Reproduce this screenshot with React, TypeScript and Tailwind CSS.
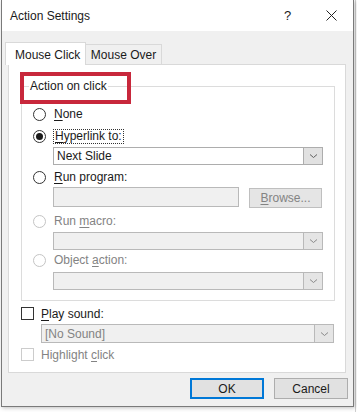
import { ReactNode } from "react";

function Radio({ checked, disabled }: { checked?: boolean; disabled?: boolean }) {
  return (
    <span
      className={
        "w-[13px] h-[13px] rounded-full border bg-white flex items-center justify-center shrink-0 " +
        (disabled ? "border-[#c4c4c4]" : "border-[#333333]")
      }
    >
      {checked ? <span className="w-[7px] h-[7px] rounded-full bg-[#1a1a1a]" /> : null}
    </span>
  );
}

function Chevron({ light }: { light?: boolean }) {
  return (
    <svg width="9" height="6" viewBox="0 0 9 6">
      <path d="M1 1.5 L4.5 4.5 L8 1.5" fill="none" stroke={light ? "#8a8a8a" : "#606060"} strokeWidth="1" />
    </svg>
  );
}

function Select({ text, disabled, w, h }: { text?: string; disabled?: boolean; w: string; h: string }) {
  return (
    <div
      className={
        "flex border " +
        w +
        " " +
        h +
        (disabled ? " bg-[#f0f0f0] border-[#b9b9b9]" : " bg-white border-[#adadad]")
      }
    >
      <div className={"flex-1 flex items-center pl-[3px] " + (disabled ? "text-[#838383]" : "text-[#1a1a1a]")}>
        {text}
      </div>
      <div
        className={
          "w-[19px] border-l flex items-center justify-center " +
          (disabled ? "bg-[#e5e5e5] border-[#b9b9b9]" : "bg-[#e1e1e1] border-[#adadad]")
        }
      >
        <Chevron light={disabled} />
      </div>
    </div>
  );
}

function Label({ children, disabled }: { children: ReactNode; disabled?: boolean }) {
  return <span className={disabled ? "text-[#838383]" : "text-[#1a1a1a]"}>{children}</span>;
}

function U({ children }: { children: ReactNode }) {
  return <span className="underline underline-offset-[2px] decoration-1">{children}</span>;
}

export default function App() {
  return (
    <div
      className="w-[357px] h-[412px] bg-white relative overflow-hidden text-[12px] leading-[16px] text-[#1a1a1a]"
      style={{ fontFamily: '"Liberation Sans", "Segoe UI", sans-serif' }}
    >
      <div className="absolute top-0 bottom-0 left-[355px] w-px bg-[#cfcfcf]" />
      <div className="ml-[1px] w-[353px] h-[407px] border-x border-b border-[#7a7a7a] bg-[#f0f0f0] flex flex-col relative shadow-[1px_1px_4px_rgba(0,0,0,0.25)]">
        {/* title bar */}
        <div className="h-[31px] bg-white flex items-center shrink-0">
          <div className="pl-[8px] flex-1 text-[12px]">Action Settings</div>
          <div className="w-[10px] mr-[32px] text-[13px]">?</div>
          <svg width="11" height="11" viewBox="0 0 11 11" className="mr-[16px]">
            <path d="M0.5 0.5 L10.5 10.5 M10.5 0.5 L0.5 10.5" stroke="#222" strokeWidth="1" />
          </svg>
        </div>

        {/* tabs */}
        <div className="pl-[3px] pt-[11px] flex items-end shrink-0">
          <div className="w-[81px] h-[23px] bg-white border border-b-0 border-[#d9d9d9] flex items-center pl-[9px] pt-[1px] relative z-10 -mb-px">
            Mouse Click
          </div>
          <div className="w-[76px] h-[20px] bg-[#f0f0f0] border border-l-0 border-b-0 border-[#d9d9d9] flex items-center justify-center pt-[1px]">
            Mouse Over
          </div>
        </div>

        {/* panel */}
        <div className="ml-[6px] w-[338px] h-[309px] bg-white border border-[#d9d9d9] pt-[21px] pl-[12px] flex flex-col shrink-0">
          <div className="w-[314px] h-[215px] border border-[#dcdcdc] relative flex flex-col pl-[11px] shrink-0">
            <div className="absolute -top-[9px] left-[7px] bg-white px-[1px]">Action on click</div>

            <div className="mt-[19px] flex items-center h-[16px]">
              <Radio />
              <span className="ml-[8px]">
                <Label><U>N</U>one</Label>
              </span>
            </div>

            <div className="mt-[6px] flex items-center h-[16px]">
              <Radio checked />
              <span className="ml-[7px] border border-dotted border-[#333] px-px leading-[13px]">
                <Label><U>H</U>yperlink to:</Label>
              </span>
            </div>

            <div className="mt-[3px] ml-[20px]">
              <Select text="Next Slide" w="w-[270px]" h="h-[18px]" />
            </div>

            <div className="mt-[4px] flex items-center h-[16px]">
              <Radio />
              <span className="ml-[8px]">
                <Label><U>R</U>un program:</Label>
              </span>
            </div>

            <div className="mt-[2px] ml-[20px] flex items-start">
              <div className="w-[186px] h-[20px] bg-[#f0f0f0] border border-[#b9b9b9]" />
              <div className="ml-[10px] mt-px w-[73px] h-[20px] bg-[#e5e5e5] border border-[#bfbfbf] flex items-center justify-center text-[#838383]">
                <span><U>B</U>rowse...</span>
              </div>
            </div>

            <div className="mt-[5px] flex items-center h-[16px]">
              <Radio disabled />
              <span className="ml-[8px]">
                <Label disabled>Run <U>m</U>acro:</Label>
              </span>
            </div>

            <div className="mt-[3px] ml-[20px]">
              <Select disabled w="w-[270px]" h="h-[18px]" />
            </div>

            <div className="mt-[2px] flex items-center h-[16px]">
              <Radio disabled />
              <span className="ml-[8px]">
                <Label disabled>Object <U>a</U>ction:</Label>
              </span>
            </div>

            <div className="mt-[4px] ml-[20px]">
              <Select disabled w="w-[270px]" h="h-[18px]" />
            </div>
          </div>

          <div className="mt-[6px] flex items-center h-[13px]">
            <span className="w-[13px] h-[13px] border border-[#333333] bg-white shrink-0" />
            <span className="ml-[7px]">
              <Label><U>P</U>lay sound:</Label>
            </span>
          </div>

          <div className="mt-[4px] ml-[20px]">
            <Select disabled text="[No Sound]" w="w-[293px]" h="h-[19px]" />
          </div>

          <div className="mt-[5px] flex items-center h-[13px]">
            <span className="w-[13px] h-[13px] border border-[#cccccc] bg-white shrink-0" />
            <span className="ml-[7px]">
              <Label disabled>Highlight <U>c</U>lick</Label>
            </span>
          </div>
        </div>

        {/* buttons */}
        <div className="mt-[5px] flex justify-end pr-[5px] gap-[10px]">
          <div className="w-[74px] h-[21px] bg-[#e1e1e1] border-2 border-[#0078d7] flex items-center justify-center">
            OK
          </div>
          <div className="w-[74px] h-[21px] bg-[#e1e1e1] border border-[#adadad] flex items-center justify-center">
            Cancel
          </div>
        </div>
      </div>

      {/* annotation */}
      <div className="absolute left-[20px] top-[72px] w-[111px] h-[32px] border-[4px] border-[#c8283c]" />
    </div>
  );
}
